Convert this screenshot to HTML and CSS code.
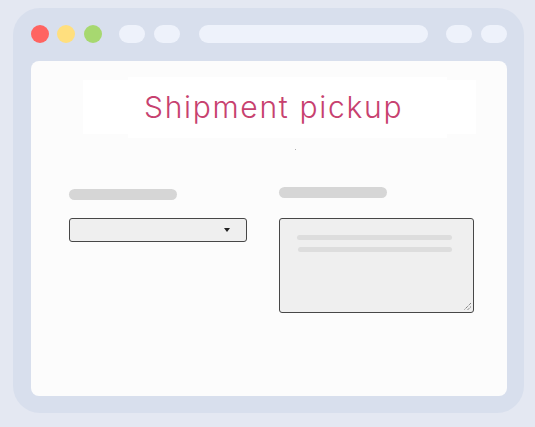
FILE: index.html
```html
<!DOCTYPE html>
<html lang="en">

<head>
    <meta charset="UTF-8">
    <meta name="viewport" content="width=device-width, initial-scale=1.0">
    <title>Shipment pickup</title>
    <link rel="stylesheet" href="styles.css">
</head>

<body>
    <div class="window">
        <div class="toolbar">
            <span class="dot red"></span>
            <span class="dot yellow"></span>
            <span class="dot green"></span>
            <span class="pill first"></span>
            <span class="pill"></span>
            <span class="url"></span>
            <span class="pill"></span>
            <span class="pill"></span>
        </div>
        <div class="page">
            <div class="title-box">
                <h1 class="title">Shipment pickup</h1>
            </div>
            <span class="speck"></span>
            <div class="form">
                <div class="field left">
                    <div class="label"></div>
                    <div class="select"><span class="caret"></span></div>
                </div>
                <div class="field">
                    <div class="label"></div>
                    <div class="textarea">
                        <div class="line"></div>
                        <div class="line second"></div>
                        <svg class="grip" width="10" height="10" viewBox="0 0 10 10">
                            <path d="M9 2 L2 9 M9 5.5 L5.5 9" stroke="#555" stroke-width="1" fill="none" stroke-dasharray="1 1" />
                        </svg>
                    </div>
                </div>
            </div>
        </div>
    </div>
</body>

</html>
```

FILE: styles.css
```css
* {
    margin: 0;
    padding: 0;
    box-sizing: border-box;
}

body {
    background-color: #e4e8f2;
    font-family: "Inter", "Liberation Sans", sans-serif;
    padding: 8px 11px 14px 13px;
}

.window {
    background-color: #d8dfed;
    border-radius: 27px;
    width: 511px;
    height: 405px;
    padding: 17px 17px 17px 18px;
}

.toolbar {
    display: flex;
    align-items: center;
    height: 18px;
    margin-bottom: 18px;
}

.toolbar span {
    flex-shrink: 0;
}

.dot {
    width: 18px;
    height: 18px;
    border-radius: 50%;
    margin-right: 8.4px;
}

.red {
    background-color: #ff6461;
}

.yellow {
    background-color: #ffdf7e;
}

.green {
    background-color: #a7d870;
    margin-right: 17.4px;
}

.pill {
    width: 26px;
    height: 18px;
    border-radius: 9px;
    background-color: #eef2fb;
    margin-right: 9px;
}

.url {
    width: 229.6px;
    height: 18px;
    border-radius: 9px;
    background-color: #eef2fb;
    margin-left: 9.4px;
    margin-right: 17.6px;
}

.page {
    background-color: #fcfcfc;
    border-radius: 8px;
    height: 335px;
    position: relative;
}

.title-box {
    background-color: #ffffff;
    width: 393px;
    height: 54px;
    margin-left: 52px;
    position: relative;
    top: 19px;
}

.title {
    background-color: #ffffff;
    width: 319px;
    height: 61px;
    position: relative;
    top: -3px;
    left: 45px;
    padding-left: 16px;
    font-size: 30px;
    font-weight: 300;
    letter-spacing: 1.7px;
    line-height: 61px;
    color: #c7416f;
    white-space: nowrap;
}

.speck {
    position: absolute;
    left: 264px;
    top: 88px;
    width: 1px;
    height: 1px;
    background-color: #b0b0b0;
}

.form {
    display: grid;
    grid-template-columns: 178px 195px;
    column-gap: 32px;
    padding-left: 38px;
    margin-top: 72px;
}

.label {
    width: 108px;
    height: 11px;
    border-radius: 6px;
    background-color: #d6d6d6;
    margin-bottom: 20px;
}

.field.left .label {
    margin-top: 2px;
    margin-bottom: 18px;
}

.select {
    height: 24px;
    border: 1px solid #474747;
    border-radius: 3px;
    background-color: #efefef;
    display: flex;
    align-items: center;
    justify-content: flex-end;
    padding-right: 16px;
}

.caret {
    width: 0;
    height: 0;
    border-left: 3.5px solid transparent;
    border-right: 3.5px solid transparent;
    border-top: 4px solid #222;
}

.textarea {
    height: 95px;
    border: 1px solid #474747;
    border-radius: 3px;
    background-color: #efefef;
    padding: 16px 21px 0 17px;
    position: relative;
}

.line {
    height: 5px;
    border-radius: 3px;
    background-color: #dddddd;
}

.line.second {
    margin-top: 7px;
    margin-left: 1px;
}

.grip {
    position: absolute;
    right: 1px;
    bottom: 1px;
}
```
